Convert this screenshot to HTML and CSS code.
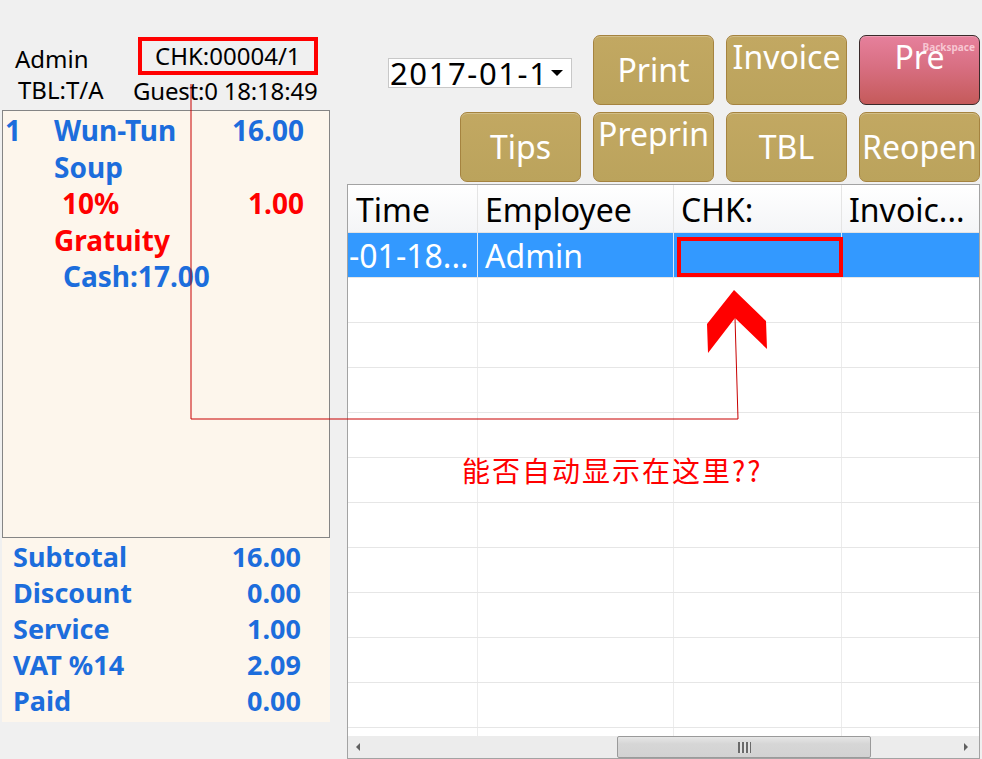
FILE: index.html
```html
<!DOCTYPE html>
<html lang="zh-CN">
<head>
    <meta charset="UTF-8">
    <title>POS - Checks</title>
    <link rel="stylesheet" href="styles.css">
</head>
<body>
    <div class="screen">
        <div class="left">
            <div class="info">
                <span class="user">Admin</span>
                <span class="chk">CHK:00004/1</span>
                <span class="tbl">TBL:T/A</span>
                <span class="guest">Guest:0 18:18:49</span>
            </div>
            <div class="ticket">
                <div class="line">
                    <span class="qty">1</span>
                    <span class="name">Wun-Tun Soup</span>
                    <span class="amt">16.00</span>
                </div>
                <div class="line red">
                    <span class="qty"></span>
                    <span class="name"><span class="pad"></span>10% Gratuity</span>
                    <span class="amt">1.00</span>
                </div>
                <div class="cash">Cash:17.00</div>
            </div>
            <div class="totals">
                <div class="total-row"><span>Subtotal</span><span>16.00</span></div>
                <div class="total-row"><span>Discount</span><span>0.00</span></div>
                <div class="total-row"><span>Service</span><span>1.00</span></div>
                <div class="total-row"><span>VAT %14</span><span>2.09</span></div>
                <div class="total-row"><span>Paid</span><span>0.00</span></div>
            </div>
        </div>

        <div class="right">
            <div class="toolbar">
                <div class="tool-row">
                    <div class="date">2017-01-1<span class="caret"></span></div>
                    <div class="btn">Print</div>
                    <div class="btn top">Invoice</div>
                    <div class="btn pink top">Pre<span class="hint">Backspace</span></div>
                </div>
                <div class="tool-row">
                    <div class="btn">Tips</div>
                    <div class="btn top">Preprin</div>
                    <div class="btn">TBL</div>
                    <div class="btn">Reopen</div>
                </div>
            </div>

            <div class="grid">
                <div class="grid-head">
                    <div class="cell">Time</div>
                    <div class="cell">Employee</div>
                    <div class="cell">CHK:</div>
                    <div class="cell">Invoic...</div>
                </div>
                <div class="grid-body">
                    <div class="grid-row selected">
                        <div class="cell clip">-01-18...</div>
                        <div class="cell">Admin</div>
                        <div class="cell"></div>
                        <div class="cell"></div>
                    </div>
                    <div class="grid-row"><div class="cell"></div><div class="cell"></div><div class="cell"></div><div class="cell"></div></div>
                    <div class="grid-row"><div class="cell"></div><div class="cell"></div><div class="cell"></div><div class="cell"></div></div>
                    <div class="grid-row"><div class="cell"></div><div class="cell"></div><div class="cell"></div><div class="cell"></div></div>
                    <div class="grid-row"><div class="cell"></div><div class="cell"></div><div class="cell"></div><div class="cell"></div></div>
                    <div class="grid-row"><div class="cell"></div><div class="cell"></div><div class="cell"></div><div class="cell"></div></div>
                    <div class="grid-row"><div class="cell"></div><div class="cell"></div><div class="cell"></div><div class="cell"></div></div>
                    <div class="grid-row"><div class="cell"></div><div class="cell"></div><div class="cell"></div><div class="cell"></div></div>
                    <div class="grid-row"><div class="cell"></div><div class="cell"></div><div class="cell"></div><div class="cell"></div></div>
                    <div class="grid-row"><div class="cell"></div><div class="cell"></div><div class="cell"></div><div class="cell"></div></div>
                    <div class="grid-row"><div class="cell"></div><div class="cell"></div><div class="cell"></div><div class="cell"></div></div>
                    <div class="grid-row"><div class="cell"></div><div class="cell"></div><div class="cell"></div><div class="cell"></div></div>
                </div>
                <div class="hscroll">
                    <span class="arrow-left"></span>
                    <div class="track">
                        <div class="thumb"><span class="grip"></span></div>
                    </div>
                    <span class="arrow-right"></span>
                </div>
            </div>
        </div>
    </div>

    <!-- annotation drawn over the screenshot -->
    <svg class="overlay" width="982" height="759" viewBox="0 0 982 759">
        <polyline points="191,84 191,419 738,419 735,318" fill="none" stroke="#c80000" stroke-width="1"/>
        <polygon points="734,290 766,321 767,349 735,318 708,353 707,324" fill="#ff0000"/>
        <rect x="679" y="239" width="162" height="36" fill="none" stroke="#ff0000" stroke-width="4"/>
    </svg>
    <div class="note">能否自动显示在这里??</div>
</body>
</html>
```

FILE: styles.css
```css
body {
    margin: 0;
    padding: 0;
    width: 982px;
    height: 759px;
    overflow: hidden;
    background-color: #f0f0f0;
    font-family: "Noto Sans", "Noto Sans CJK SC", sans-serif;
    position: relative;
}
.screen {
    display: flex;
    height: 759px;
}

/* left side: ticket */
.left {
    width: 347px;
    flex-shrink: 0;
}
.info {
    display: grid;
    grid-template-columns: 118px 190px;
    grid-template-rows: 40px 26px;
    padding: 37px 0 0 15px;
    height: 73px;
    font-size: 24px;
    line-height: 26px;
    color: #000;
    white-space: nowrap;
}
.user {
    align-self: center;
    padding-top: 4px;
}
.chk {
    box-sizing: border-box;
    width: 180px;
    height: 38px;
    margin-left: 5px;
    border: 4px solid #ff0000;
    padding-left: 13px;
    line-height: 30px;
}
.tbl {
    padding-left: 3px;
}
.guest {
    padding-top: 1px;
    letter-spacing: -0.2px;
}
.ticket {
    box-sizing: border-box;
    width: 328px;
    height: 428px;
    margin-left: 2px;
    background-color: #fdf6ec;
    border: 1px solid #858585;
    padding-top: 1px;
    font-weight: bold;
    font-size: 28px;
    line-height: 36.5px;
    color: #1c6ddc;
}
.line {
    display: grid;
    grid-template-columns: 51px 142px 108px;
}
.line .qty {
    padding-left: 2px;
}
.line .amt {
    text-align: right;
}
.line.red {
    color: #ff0000;
}
.pad {
    display: inline-block;
    width: 8px;
}
.cash {
    padding-left: 60px;
}
.totals {
    width: 328px;
    height: 184px;
    margin-left: 2px;
    background-color: #fdf6ec;
    padding-top: 1px;
    box-sizing: border-box;
    font-weight: bold;
    font-size: 27px;
    line-height: 36px;
    color: #1c6ddc;
}
.total-row {
    display: flex;
    justify-content: space-between;
    padding: 0 29px 0 11px;
}

/* right side */
.right {
    flex: 1;
    display: flex;
    flex-direction: column;
    padding-right: 2px;
}
.toolbar {
    height: 185px;
    box-sizing: border-box;
    padding-top: 35px;
    display: flex;
    flex-direction: column;
    gap: 7px;
}
.tool-row {
    display: flex;
    justify-content: flex-end;
    gap: 12px;
}
.date {
    box-sizing: border-box;
    width: 184px;
    height: 30px;
    margin: 23px 9px 0 0;
    background-color: #fff;
    border: 1px solid #c8c8c8;
    font-size: 31px;
    line-height: 28px;
    letter-spacing: 1.6px;
    padding-left: 1px;
    position: relative;
    white-space: nowrap;
}
.caret {
    position: absolute;
    right: 8px;
    top: 11px;
    border-left: 6px solid transparent;
    border-right: 6px solid transparent;
    border-top: 6px solid #000;
}
.btn {
    box-sizing: border-box;
    width: 121px;
    height: 70px;
    border: 1px solid #a5833f;
    border-radius: 7px;
    background: linear-gradient(#c2a862, #bba35c);
    box-shadow: inset 0 1px 0 rgba(255, 255, 255, 0.25);
    color: #fff;
    font-size: 32px;
    line-height: 38px;
    display: flex;
    align-items: center;
    justify-content: center;
    overflow: hidden;
    white-space: nowrap;
    position: relative;
}
.btn.top {
    align-items: flex-start;
    padding-top: 2px;
}
.btn.pink {
    border-color: #3a2a2a;
    background: linear-gradient(#e6809c, #d86f82 45%, #c55a5a);
}
.hint {
    position: absolute;
    top: 5px;
    right: 4px;
    font-size: 10px;
    line-height: 12px;
    font-weight: bold;
    color: #f7c6d2;
}

/* history grid */
.grid {
    height: 575px;
    border: 1px solid #a3a3a3;
    background-color: #fff;
    display: flex;
    flex-direction: column;
    overflow: hidden;
}
.grid-head, .grid-row {
    display: grid;
    grid-template-columns: 129px 196px 168px 1fr;
    flex-shrink: 0;
}
.grid-head {
    height: 48px;
    background: linear-gradient(#ffffff, #f4f5f7);
    border-bottom: 1px solid #e3e3e3;
    box-sizing: border-box;
    font-size: 32px;
    line-height: 50px;
    color: #000;
}
.grid-head .cell {
    border-left: 1px solid #e5e5e5;
    padding-left: 7px;
    white-space: nowrap;
}
.grid-head .cell:first-child {
    border-left: none;
    padding-left: 8px;
}
.grid-body {
    flex: 1;
    overflow: hidden;
}
.grid-row {
    height: 45px;
    box-sizing: border-box;
    border-bottom: 1px solid #e6e6e6;
    font-size: 32px;
    line-height: 46px;
}
.grid-row .cell {
    border-left: 1px solid #ececec;
    padding-left: 7px;
    white-space: nowrap;
    overflow: hidden;
}
.grid-row .cell:first-child {
    border-left: none;
}
.grid-row .cell.clip {
    padding-left: 1px;
}
.grid-row.selected {
    background-color: #3399ff;
    color: #fff;
}
.grid-row.selected .cell {
    border-left-color: #d8e9fb;
}
.hscroll {
    height: 22px;
    flex-shrink: 0;
    display: flex;
    align-items: center;
    background-color: #ececec;
}
.arrow-left, .arrow-right {
    width: 0;
    height: 0;
    border-top: 4px solid transparent;
    border-bottom: 4px solid transparent;
}
.arrow-left {
    border-right: 4px solid #606060;
    margin: 0 22px 0 8px;
}
.arrow-right {
    border-left: 4px solid #606060;
    margin: 0 11px 0 0;
}
.track {
    flex: 1;
    height: 22px;
    display: flex;
    align-items: center;
}
.thumb {
    box-sizing: border-box;
    width: 254px;
    height: 22px;
    margin-left: 235px;
    border: 1px solid #9a9a9a;
    border-radius: 2px;
    background: linear-gradient(#e6e6e6, #d6d6d6 35%, #d2d2d2);
    display: flex;
    align-items: center;
    justify-content: center;
}
.grip {
    width: 13px;
    height: 11px;
    background: repeating-linear-gradient(90deg, #6a6a6a 0 2px, #e2e2e2 2px 4px);
}

/* annotation */
.overlay {
    position: absolute;
    top: 0;
    left: 0;
    pointer-events: none;
}
.note {
    position: absolute;
    left: 462px;
    top: 452px;
    font-family: "Noto Sans CJK SC", sans-serif;
    font-size: 28px;
    line-height: 36px;
    letter-spacing: 2px;
    color: #ff0000;
}
```
